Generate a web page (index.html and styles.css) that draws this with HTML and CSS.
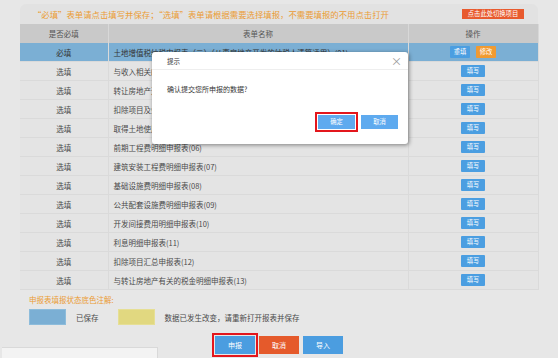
FILE: index.html
```html
<!DOCTYPE html>
<html>

<head>
    <meta charset="utf-8">
    <link rel="stylesheet" href="styles.css">
    <title>申报表填报</title>
</head>

<body>
    <div class="page">
        <div class="notice">
            <span class="notice-text">“必填”表单请点击填写并保存；“选填”表单请根据需要选择填报，不需要填报的不用点击打开</span>
            <span class="switch">点击此处切换项目</span>
        </div>

        <table class="forms">
            <colgroup>
                <col class="col-req">
                <col class="col-name">
                <col class="col-op">
            </colgroup>
            <tr>
                <th>是否必填</th>
                <th>表单名称</th>
                <th>操作</th>
            </tr>
            <tr class="saved">
                <td class="must">必填</td>
                <td class="name">土地增值税纳税申报表（二）（从事房地产开发的纳税人清算适用）(01)</td>
                <td><span class="btn-sm">重填</span><span class="btn-sm orange">修改</span></td>
            </tr>
            <tr>
                <td>选填</td>
                <td class="name">与收入相关的明细申报表(02)</td>
                <td><span class="btn-sm">填写</span></td>
            </tr>
            <tr>
                <td>选填</td>
                <td class="name">转让房地产开发成本明细申报表(03)</td>
                <td><span class="btn-sm">填写</span></td>
            </tr>
            <tr>
                <td>选填</td>
                <td class="name">扣除项目及金额明细申报表(04)</td>
                <td><span class="btn-sm">填写</span></td>
            </tr>
            <tr>
                <td>选填</td>
                <td class="name">取得土地使用权支付金额明细申报表(05)</td>
                <td><span class="btn-sm">填写</span></td>
            </tr>
            <tr>
                <td>选填</td>
                <td class="name">前期工程费明细申报表(06)</td>
                <td><span class="btn-sm">填写</span></td>
            </tr>
            <tr>
                <td>选填</td>
                <td class="name">建筑安装工程费明细申报表(07)</td>
                <td><span class="btn-sm">填写</span></td>
            </tr>
            <tr>
                <td>选填</td>
                <td class="name">基础设施费明细申报表(08)</td>
                <td><span class="btn-sm">填写</span></td>
            </tr>
            <tr>
                <td>选填</td>
                <td class="name">公共配套设施费明细申报表(09)</td>
                <td><span class="btn-sm">填写</span></td>
            </tr>
            <tr>
                <td>选填</td>
                <td class="name">开发间接费用明细申报表(10)</td>
                <td><span class="btn-sm">填写</span></td>
            </tr>
            <tr>
                <td>选填</td>
                <td class="name">利息明细申报表(11)</td>
                <td><span class="btn-sm">填写</span></td>
            </tr>
            <tr>
                <td>选填</td>
                <td class="name">扣除项目汇总申报表(12)</td>
                <td><span class="btn-sm">填写</span></td>
            </tr>
            <tr>
                <td>选填</td>
                <td class="name">与转让房地产有关的税金明细申报表(13)</td>
                <td><span class="btn-sm">填写</span></td>
            </tr>
        </table>

        <div class="legend">
            <div class="legend-title">申报表填报状态底色注解:</div>
            <div class="legend-row">
                <span class="swatch blue"></span>
                <span class="legend-label">已保存</span>
                <span class="swatch yellow"></span>
                <span class="legend-label">数据已发生改变，请重新打开报表并保存</span>
            </div>
        </div>

        <div class="actions">
            <span class="btn marked">申报</span>
            <span class="btn red">取消</span>
            <span class="btn">导入</span>
        </div>
    </div>

    <!-- confirm dialog -->
    <div class="dialog">
        <div class="dialog-head">
            <span>提示</span>
            <span class="close">×</span>
        </div>
        <div class="dialog-body">确认提交您所申报的数据?</div>
        <div class="dialog-foot">
            <span class="dbtn marked">确定</span>
            <span class="dbtn">取消</span>
        </div>
    </div>

    <div class="statusbar"></div>
</body>

</html>
```

FILE: styles.css
```css
body {
    margin: 0;
    width: 558px;
    height: 358px;
    position: relative;
    overflow: hidden;
    background: #e7e7e7;
    font-family: "Noto Sans CJK SC", "Microsoft YaHei", sans-serif;
    font-size: 7.5px;
    color: #4a4a4a;
}

.page {
    padding: 4px 20px 0;
}

.notice {
    height: 20px;
    background: #e2e2e2;
    border-radius: 6px 6px 0 0;
    display: flex;
    align-items: center;
    justify-content: space-between;
    padding: 0 14px 0 13px;
}

.notice-text {
    color: #eb9c35;
    font-size: 8.4px;
}

.switch {
    width: 62px;
    height: 10px;
    line-height: 10px;
    text-align: center;
    background: #e85a2e;
    color: #fff;
    font-size: 6.3px;
}

.forms {
    width: 100%;
    border-collapse: collapse;
    table-layout: fixed;
    background: #e4e4e4;
}

.col-req {
    width: 88px;
}

.col-name {
    width: 300px;
}

.col-op {
    width: 130px;
}

.forms th {
    height: 19px;
    padding: 0;
    background: #c9c9c9;
    font-weight: normal;
    color: #555;
    border-right: 1px solid #d8d8d8;
}

.forms td {
    height: 18px;
    padding: 0;
    text-align: center;
    border-bottom: 1px solid #dadada;
    border-right: 1px solid #dadada;
    white-space: nowrap;
    overflow: hidden;
}

.forms td.name {
    text-align: left;
    padding-left: 5px;
}

.forms tr.saved td {
    background: #7bafd4;
    color: #333;
}

.forms td.must {
    color: #e3171d;
}

.btn-sm {
    display: inline-block;
    width: 24px;
    height: 12px;
    line-height: 12px;
    vertical-align: middle;
    background: #4b9ee1;
    color: #fff;
    font-size: 6.3px;
    border-radius: 1px;
}

.saved .btn-sm {
    width: 20px;
    margin: 0 3px;
}

.btn-sm.orange {
    background: #f09a32;
}

.legend {
    padding: 5px 9px 0;
}

.legend-title {
    color: #eb9c35;
    height: 10px;
    line-height: 10px;
}

.legend-row {
    display: flex;
    align-items: center;
    margin-top: 4px;
}

.swatch {
    width: 37px;
    height: 16px;
    box-sizing: border-box;
}

.swatch.blue {
    background: #7bafd4;
    border: 1px solid #8dbcdb;
}

.swatch.yellow {
    background: #e1d880;
    border: 1px solid #e6df95;
}

.legend-label {
    margin: 0 19px 0 10px;
}

.actions {
    display: flex;
    justify-content: center;
    gap: 4px;
    margin-top: 11px;
}

.btn {
    width: 40px;
    height: 18px;
    line-height: 18px;
    text-align: center;
    background: #4b9de0;
    color: #fff;
    font-size: 7px;
}

.btn.red {
    background: #e55a2b;
}

.marked {
    outline: 2px solid #e3161c;
    outline-offset: 1px;
}

.dialog {
    position: absolute;
    left: 152px;
    top: 52px;
    width: 256px;
    height: 92px;
    background: #fff;
    border-radius: 3px;
    box-shadow: 1px 1px 4px rgba(0, 0, 0, 0.45);
    color: #333;
}

.dialog-head {
    height: 17px;
    display: flex;
    align-items: center;
    justify-content: space-between;
    padding: 0 6px 0 15px;
    border-bottom: 1px solid #eeeeee;
    font-size: 6.5px;
}

.close {
    font-size: 11px;
    color: #999;
}

.dialog-body {
    padding: 14px 0 0 15px;
    height: 23px;
    font-size: 7px;
}

.dialog-foot {
    display: flex;
    justify-content: flex-end;
    gap: 6px;
    padding: 8px 10px 0;
}

.dbtn {
    width: 37px;
    height: 14px;
    line-height: 14px;
    text-align: center;
    background: #5eaaef;
    color: #fff;
    font-size: 6.3px;
}

.statusbar {
    position: absolute;
    left: 2px;
    top: 347px;
    width: 155px;
    height: 12px;
    background: #f3f3f3;
    border-top: 1px solid #d9d9d9;
    border-right: 1px solid #d9d9d9;
}
```
